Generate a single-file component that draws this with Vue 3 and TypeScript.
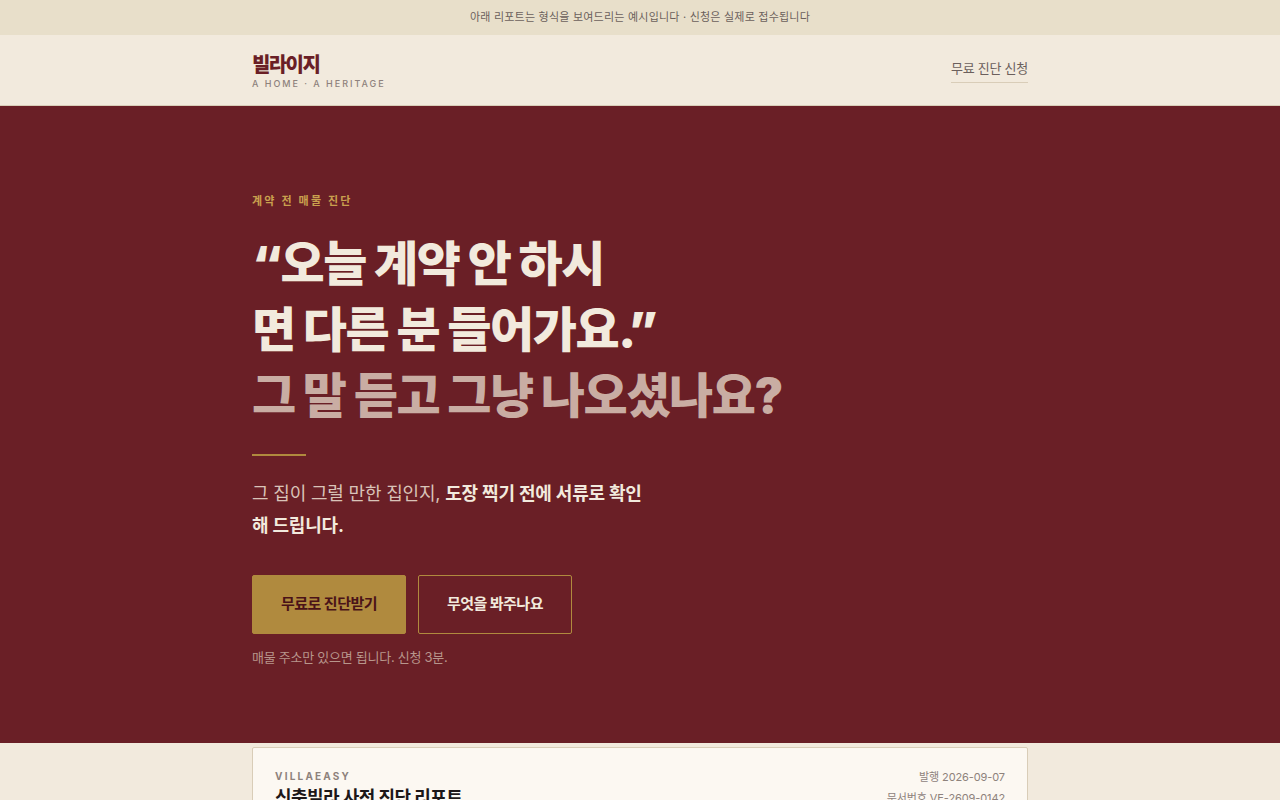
<script setup lang="ts">
const reportDate: string = '2026-09-07'
const reportNumber: string = 'VE-2609-0142'
</script>

<template>
  <div class="page">
    <p class="notice">아래 리포트는 형식을 보여드리는 예시입니다 · 신청은 실제로 접수됩니다</p>
    <header class="header">
      <div class="wrap bar">
        <a class="brand" href="#top">
          <span class="name">빌라이지</span>
          <span class="tag">A HOME · A HERITAGE</span>
        </a>
        <a class="apply" href="#apply">무료 진단 신청</a>
      </div>
    </header>
    <main>
      <section id="top" class="hero">
        <div class="wrap">
          <p class="eyebrow">계약 전 매물 진단</p>
          <h1>“오늘 계약 안 하시<br>면 다른 분 들어가요.”<br><span class="soft">그 말 듣고 그냥 나오셨나요?</span></h1>
          <div class="rule"></div>
          <p class="lead">그 집이 그럴 만한 집인지, <b>도장 찍기 전에 서류로 확인<br>해 드립니다.</b></p>
          <div class="actions">
            <a class="btn primary" href="#apply">무료로 진단받기</a>
            <a class="btn" href="#report">무엇을 봐주나요</a>
          </div>
          <p class="hint">매물 주소만 있으면 됩니다. 신청 3분.</p>
        </div>
      </section>
      <section id="report" class="wrap">
        <article class="report">
          <div>
            <p class="mark">VILLAEASY</p>
            <h2>신축빌라 사전 진단 리포트</h2>
          </div>
          <p class="meta">발행 {{ reportDate }}<br>문서번호 {{ reportNumber }}</p>
        </article>
      </section>
    </main>
  </div>
</template>

<style>
body {
  margin: 0;
  background: #f2eadd;
  overflow: hidden;
}
</style>

<style scoped>
.page {
  height: 100vh;
  overflow: hidden;
  background: #f2eadd;
  color: #1d1718;
  font-family: Inter, "Noto Sans CJK KR", sans-serif;
}
p, h1, h2 { margin: 0; }
a { color: inherit; text-decoration: none; }
.wrap {
  box-sizing: border-box;
  max-width: 824px;
  margin: 0 auto;
  padding: 0 24px;
}
.notice {
  padding: 8px 24px;
  background: #e8dfca;
  color: #6b5f5c;
  font-size: 11px;
  line-height: 19px;
  letter-spacing: 0.02em;
  text-align: center;
}
.header { border-bottom: 1px solid #d9cdb8; }
.bar {
  display: flex;
  align-items: center;
  justify-content: space-between;
  height: 70px;
}
.brand { display: flex; flex-direction: column; padding-top: 2px; }
.name {
  color: #6a1f26;
  font-size: 20px;
  font-weight: 800;
  line-height: 26px;
  letter-spacing: -0.08em;
}
.tag {
  color: #8e827c;
  font-size: 9px;
  font-weight: 500;
  line-height: 12px;
  letter-spacing: 0.22em;
}
.apply {
  padding-bottom: 3px;
  border-bottom: 1px solid #d9cdb8;
  color: #6b5f5c;
  font-size: 13px;
  line-height: 22px;
  letter-spacing: -0.02em;
}
.hero {
  padding: 85px 0 76px;
  background: #6a1f26;
  color: #f2eadd;
}
.eyebrow {
  color: #c9a04e;
  font-size: 11px;
  font-weight: 700;
  line-height: 20px;
  letter-spacing: 0.2em;
}
h1 {
  margin-top: 20px;
  font-size: 48px;
  font-weight: 900;
  line-height: 66px;
  letter-spacing: -0.03em;
}
.soft { color: #c9ada3; }
.rule {
  width: 54px;
  height: 2px;
  margin: 25px 0 22px;
  background: #b08a3e;
}
.lead {
  color: #d9c3b8;
  font-size: 18px;
  line-height: 32px;
  letter-spacing: -0.01em;
}
.lead b { color: #f2eadd; }
.actions { display: flex; gap: 12px; margin-top: 33px; }
.btn {
  padding: 17px 28px 19px;
  border: 1px solid #b08a3e;
  border-radius: 2px;
  font-size: 15px;
  font-weight: 700;
  line-height: 21px;
  letter-spacing: -0.035em;
}
.primary {
  background: #b08a3e;
  color: #4a1218;
}
.hint {
  margin-top: 13px;
  color: #b8968c;
  font-size: 13px;
  line-height: 20px;
  letter-spacing: -0.02em;
}
.report {
  display: flex;
  justify-content: space-between;
  margin-top: 4px;
  padding: 18px 22px;
  border: 1px solid #d9cdb8;
  border-radius: 2px;
  background: #fcf8f2;
}
.mark {
  color: #8e827c;
  font-size: 10px;
  font-weight: 700;
  line-height: 20px;
  letter-spacing: 0.22em;
}
h2 { font-size: 18px; line-height: 24px; letter-spacing: -0.03em; }
.meta {
  padding-top: 1px;
  color: #8e827c;
  font-size: 11px;
  line-height: 21px;
  letter-spacing: -0.01em;
  text-align: right;
}
</style>
